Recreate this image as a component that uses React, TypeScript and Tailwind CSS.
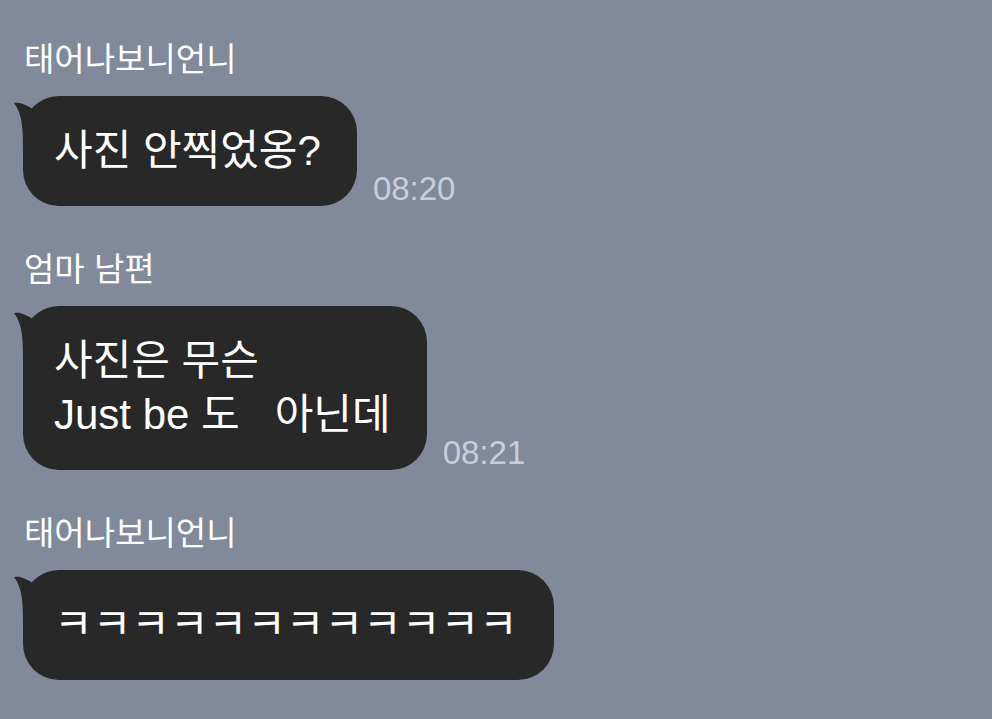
import React from "react";

type Msg = {
    name: string;
    lines: string[];
    time?: string;
};

const messages: Msg[] = [
    { name: "태어나보니언니", lines: ["사진 안찍었옹?"], time: "08:20" },
    { name: "엄마 남편", lines: ["사진은 무슨", "Just be 도   아닌데"], time: "08:21" },
    { name: "태어나보니언니", lines: ["ㅋㅋㅋㅋㅋㅋㅋㅋㅋㅋㅋㅋ"] },
];

function Tail() {
    return (
        <svg
            width="30"
            height="50"
            viewBox="0 0 30 50"
            className="absolute left-[-9px] top-[6px]"
        >
            <path d="M0 1 C6 0 12 3 19 7 L24 3 L24 50 L9 50 C9 30 9 12 0 1 Z" fill="#282828" />
        </svg>
    );
}

function Bubble({ msg }: { msg: Msg }) {
    return (
        <div className="flex flex-col">
            <div className="pl-[24px] text-[33px] leading-[40px] text-white">{msg.name}</div>
            <div className="flex items-end gap-[16px] mt-[16px]">
                <div className="relative ml-[23px] rounded-[36px] bg-[#282828] pl-[31px] pr-[36px] py-[28px]">
                    <Tail />
                    <p className="relative text-[42px] leading-[54px] text-white whitespace-pre">
                        {msg.lines.join("\n")}
                    </p>
                </div>
                {msg.time && (
                    <span className="mb-[-5px] text-[33px] leading-[44px] text-[#c9cfd9]">{msg.time}</span>
                )}
            </div>
        </div>
    );
}

export default function App() {
    return (
        <main
            className="w-[992px] h-[719px] overflow-hidden bg-[#808a9b] pt-[40px] flex flex-col gap-[44px]"
            style={{ fontFamily: '"Liberation Sans", "Noto Sans CJK KR", sans-serif' }}
        >
            {messages.map((m, i) => (
                <Bubble key={i} msg={m} />
            ))}
        </main>
    );
}
